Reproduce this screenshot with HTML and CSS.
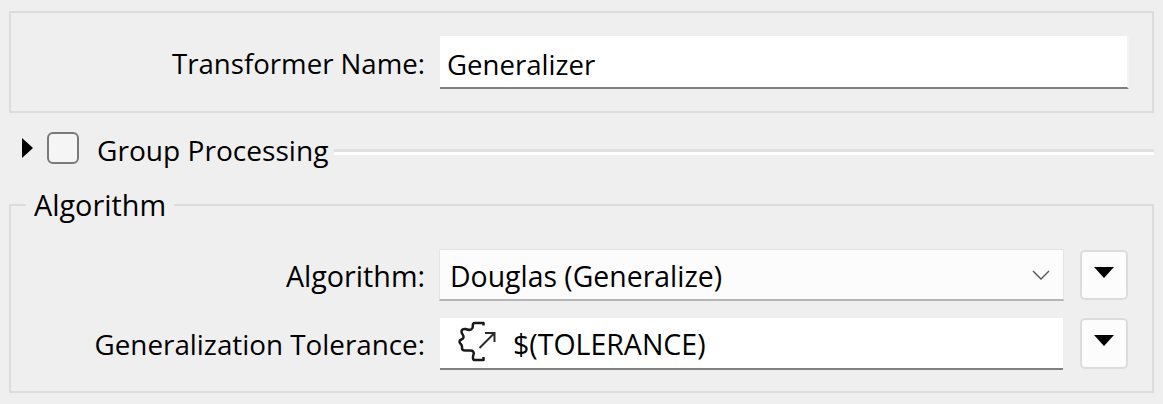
FILE: index.html
```html
<!DOCTYPE html>
<html lang="en">
<head>
<meta charset="utf-8">
<title>Generalizer</title>
<link rel="stylesheet" href="styles.css">
</head>
<body>
<section class="panel name-panel">
  <label class="label">Transformer Name:</label>
  <div class="field field-plain">Generalizer</div>
</section>
<div class="group-row">
  <svg class="disclosure" width="12" height="20" viewBox="0 0 12 20"><path d="M0 0 L11 10 L0 20 Z" fill="#000"/></svg>
  <span class="checkbox"></span>
  <span class="group-title">Group Processing</span>
  <span class="rule"></span>
</div>
<section class="panel algo-panel">
  <h2 class="legend">Algorithm</h2>
  <div class="row">
    <label class="label label-short">Algorithm:</label>
    <div class="field field-combo">
      <span class="field-text">Douglas (Generalize)</span>
      <svg class="chevron" width="18" height="10" viewBox="0 0 18 10"><path d="M1 1 L9 9 L17 1" fill="none" stroke="#555" stroke-width="1.4"/></svg>
    </div>
    <button class="menu-btn menu-btn-first"><svg width="20" height="11" viewBox="0 0 20 11"><path d="M0 0 H20 L10 11 Z" fill="#000"/></svg></button>
  </div>
  <div class="row row-two">
    <label class="label label-long">Generalization Tolerance:</label>
    <div class="field field-value">
      <svg class="param-icon" width="55" height="50" viewBox="0 2 55 50"><path d="M33.500 9.500 V7 H25 C21.500 7 23.500 10 22.500 12 C21 15 18 14 15.500 13 C13 12.500 11.500 14 11.500 15.500 C11.500 18 14 19 13.500 21.500 C13 24 9.500 23 9.500 25.500 C9.500 28 12 28 12 30.500 V32 C12 34 13 34.500 15 34.500 H20 C23 34.500 24.500 36 23.500 38.500 C22.500 41 22.500 44 25 44 H33.500 V41" fill="none" stroke="#1a1a1a" stroke-width="2.500" stroke-linejoin="round"/><path d="M29.500 32 L44 17.500 M35 17 H44.500 V26" fill="none" stroke="#2a2a2a" stroke-width="2"/></svg>
      <span class="field-text">$(TOLERANCE)</span>
    </div>
    <button class="menu-btn"><svg width="20" height="11" viewBox="0 0 20 11"><path d="M0 0 H20 L10 11 Z" fill="#000"/></svg></button>
  </div>
</section>
</body>
</html>
```
FILE: styles.css
```css
html, body { margin: 0; padding: 0; }
body {
  width: 1163px;
  height: 404px;
  overflow: hidden;
  box-sizing: border-box;
  padding: 11px 9px 0;
  background: #efefef;
  font-family: "Open Sans", "Noto Sans", sans-serif;
  font-size: 27.6px;
  color: #000;
}
.panel { border: 2px solid #dcdcdc; box-sizing: border-box; width: 1145px; }
.name-panel {
  height: 102px;
  display: flex;
  align-items: flex-start;
  padding-top: 23px;
}
.label {
  width: 414px;
  text-align: right;
  line-height: 55px;
  flex: none;
  white-space: nowrap;
}
.label-short { font-size: 28.700px; line-height: 53px; }
.label-long { font-size: 27.800px; line-height: 53px; }
.field { box-sizing: border-box; margin-left: 15px; background: #fff; }
.field-text { line-height: 38px; padding-top: 2px; }
.field-plain {
  width: 689px;
  height: 53px;
  padding-left: 7px;
  line-height: 57px;
  border-bottom: 2px solid #808080;
  border-right: 2px solid #f3f3f3;
}
.group-row { display: flex; align-items: center; height: 76px; padding-left: 13px; margin-bottom: 15px; }
.disclosure { flex: none; margin-top: -6px; }
.checkbox {
  flex: none;
  width: 32px;
  height: 32px;
  box-sizing: border-box;
  margin-left: 13px;
  margin-top: -6px;
  border: 2px solid #7a7a7a;
  border-radius: 6px;
  background: #f5f5f5;
}
.group-title { margin-left: 18px; white-space: nowrap; font-size: 28.100px; line-height: 34px; margin-top: -3px; }
.rule {
  flex: 1;
  height: 6px;
  margin-left: 6px;
  margin-top: 2px;
  background: linear-gradient(#e0e0e0 0 3px, #fff 3px);
}
.algo-panel {
  position: relative;
  height: 189px;
  padding-top: 43px;
}
.legend {
  position: absolute;
  left: 15px;
  top: -18px;
  margin: 0;
  padding: 0 8px;
  font-weight: 400;
  font-size: 28.800px;
  line-height: 34px;
  background: #efefef;
}
.row { display: flex; align-items: flex-start; }
.row-two { margin-top: 16px; }
.field-combo {
  width: 625px;
  height: 52px;
  padding: 0 13px 0 10px;
  display: flex;
  align-items: center;
  justify-content: space-between;
  border: 1px solid #e4e4e4;
  border-bottom: 2px solid #b5b5b5;
  background: #fcfcfc;
  font-size: 28.400px;
  margin-left: 14px;
}
.field-value {
  width: 623px;
  height: 52px;
  display: flex;
  align-items: center;
  padding-left: 10px;
  font-size: 28.500px;
  border-bottom: 2px solid #808080;
}
.param-icon { flex: none; margin-right: 8px; }
.menu-btn {
  flex: none;
  width: 48px;
  height: 51px;
  margin-left: 17px;
  padding: 0 0 6px;
  display: flex;
  align-items: center;
  justify-content: center;
  background: #fcfcfc;
  border: 2px solid #dcdcdc;
  border-radius: 5px;
}
.menu-btn-first { height: 50px; margin-left: 16px; margin-top: 1px; }
.chevron { flex: none; }
```
